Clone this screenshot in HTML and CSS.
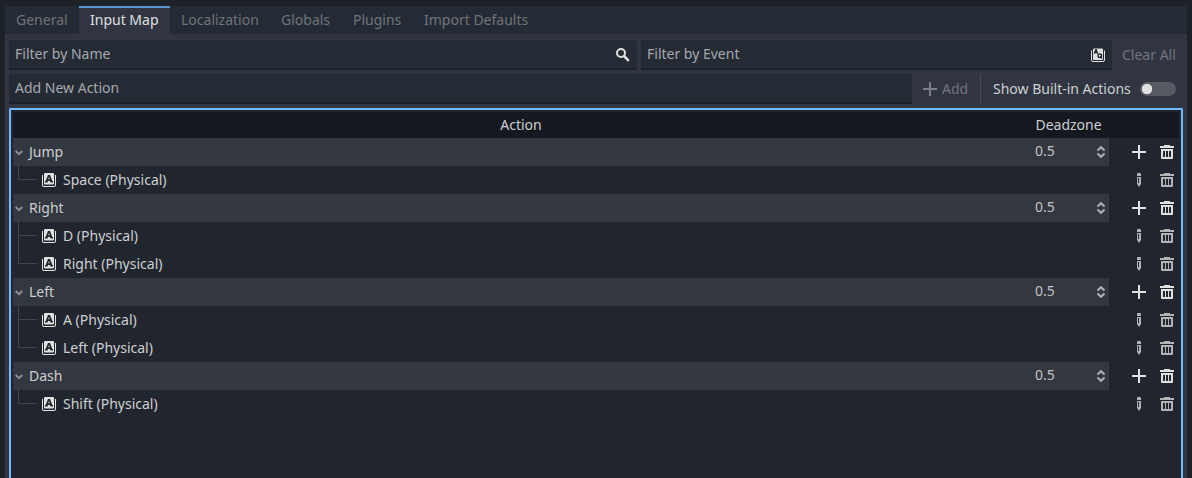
FILE: index.html
```
<!DOCTYPE html>
<html lang="en">
<head>
<meta charset="utf-8">
<title>Project Settings</title>
<link rel="stylesheet" href="styles.css">
</head>
<body>
<svg class="defs" width="0" height="0">
  <symbol id="plus" viewBox="0 0 16 16"><path d="M7 1h2v6h6v2H9v6H7V9H1V7h6z"/></symbol>
  <symbol id="trash" viewBox="0 0 16 16"><path fill-rule="evenodd" d="M5 1v1H1v2h14V2h-4V1zM2 5v9a1 1 0 0 0 1 1h10a1 1 0 0 0 1-1V5zm2 2h2v6H4zm3 0h2v6H7zm3 0h2v6h-2z"/></symbol>
  <symbol id="pencil" viewBox="0 0 16 16"><path fill-rule="evenodd" d="M7 1a1 1 0 0 0-1 1v2h4V2a1 1 0 0 0-1-1zM6 5v7l2 3 2-3V5zm1 1h1v5H7z"/></symbol>
  <symbol id="key" viewBox="0 0 16 16"><path fill-rule="evenodd" d="M4 1a1 1 0 0 0-1 1v9.500a1 1 0 0 0 1 1h8a1 1 0 0 0 1-1V2a1 1 0 0 0-1-1zm3 2h2l2.300 6H12v1.500H9.500L9 9H7l-.5 1.500H4V9h.7zm1 1.800L7.300 7.200h1.400z"/><path d="M1 3v10a2 2 0 0 0 2 2h10a2 2 0 0 0 2-2V3h-1v10a1 1 0 0 1-1 1H3a1 1 0 0 1-1-1V3z"/></symbol>
  <symbol id="chevron" viewBox="0 0 10 8"><path d="M1.700 2 5 5.200 8.300 2" fill="none" stroke="currentColor" stroke-width="2"/></symbol>
  <symbol id="updown" viewBox="0 0 10 14"><path d="M1.500 5.500 5 2.200l3.500 3.300M1.500 8.500 5 11.800l3.500-3.300" fill="none" stroke="currentColor" stroke-width="2"/></symbol>
</svg>
<div class="panel">
  <nav class="tabs">
    <span class="tab t1">General</span><span class="tab t2 active">Input Map</span><span class="tab t3">Localization</span><span class="tab t4">Globals</span><span class="tab t5">Plugins</span><span class="tab t6">Import Defaults</span>
  </nav>
  <div class="content">
    <div class="bar">
      <div class="field name"><span>Filter by Name</span><svg class="icon" viewBox="0 0 16 16"><circle cx="6" cy="6" r="4" fill="none" stroke="currentColor" stroke-width="2"/><path d="m9 9 4.800 4.800" stroke="currentColor" stroke-width="2.600"/></svg></div>
      <div class="field event"><span>Filter by Event</span><svg class="icon" viewBox="0 0 16 16"><path d="M4 1.500h8a1 1 0 0 1 1 1V12a1 1 0 0 1-1 1H4a1 1 0 0 1-1-1V2.500a1 1 0 0 1 1-1z"/><path d="M1.500 3.500V13a1.500 1.500 0 0 0 1.500 1.500h10a1.500 1.500 0 0 0 1.500-1.500V3.500" fill="none" stroke="currentColor"/><path class="cut" d="m4.300 6.800 1.500-4h.4l1.500 4M5 5.600h2"/><circle class="cut" cx="9.800" cy="8.800" r="1.800"/><path class="cut" d="m10 9.300 2 2.300"/></svg></div>
      <span class="clear">Clear All</span>
    </div>
    <div class="bar">
      <div class="field action"><span>Add New Action</span></div>
      <div class="add"><svg class="icon"><use href="#plus"/></svg><span>Add</span></div>
      <div class="builtin"><span>Show Built-in Actions</span><i class="toggle"></i></div>
    </div>
    <div class="tree">
      <div class="row head"><span class="cell">Action</span><span class="cell zone-title">Deadzone</span><span class="cell"></span></div>

      <div class="row group"><div class="label"><svg class="chev"><use href="#chevron"/></svg>Jump</div><div class="zone">0.5<svg class="spin"><use href="#updown"/></svg></div><div class="tools"><svg class="icon"><use href="#plus"/></svg><svg class="icon"><use href="#trash"/></svg></div></div>
      <div class="row event-row last"><div class="label"><i class="branch"></i><svg class="icon"><use href="#key"/></svg>Space (Physical)</div><div></div><div class="tools"><svg class="icon"><use href="#pencil"/></svg><svg class="icon"><use href="#trash"/></svg></div></div>

      <div class="row group"><div class="label"><svg class="chev"><use href="#chevron"/></svg>Right</div><div class="zone">0.5<svg class="spin"><use href="#updown"/></svg></div><div class="tools"><svg class="icon"><use href="#plus"/></svg><svg class="icon"><use href="#trash"/></svg></div></div>
      <div class="row event-row"><div class="label"><i class="branch"></i><svg class="icon"><use href="#key"/></svg>D (Physical)</div><div></div><div class="tools"><svg class="icon"><use href="#pencil"/></svg><svg class="icon"><use href="#trash"/></svg></div></div>
      <div class="row event-row last"><div class="label"><i class="branch"></i><svg class="icon"><use href="#key"/></svg>Right (Physical)</div><div></div><div class="tools"><svg class="icon"><use href="#pencil"/></svg><svg class="icon"><use href="#trash"/></svg></div></div>

      <div class="row group"><div class="label"><svg class="chev"><use href="#chevron"/></svg>Left</div><div class="zone">0.5<svg class="spin"><use href="#updown"/></svg></div><div class="tools"><svg class="icon"><use href="#plus"/></svg><svg class="icon"><use href="#trash"/></svg></div></div>
      <div class="row event-row"><div class="label"><i class="branch"></i><svg class="icon"><use href="#key"/></svg>A (Physical)</div><div></div><div class="tools"><svg class="icon"><use href="#pencil"/></svg><svg class="icon"><use href="#trash"/></svg></div></div>
      <div class="row event-row last"><div class="label"><i class="branch"></i><svg class="icon"><use href="#key"/></svg>Left (Physical)</div><div></div><div class="tools"><svg class="icon"><use href="#pencil"/></svg><svg class="icon"><use href="#trash"/></svg></div></div>

      <div class="row group"><div class="label"><svg class="chev"><use href="#chevron"/></svg>Dash</div><div class="zone">0.5<svg class="spin"><use href="#updown"/></svg></div><div class="tools"><svg class="icon"><use href="#plus"/></svg><svg class="icon"><use href="#trash"/></svg></div></div>
      <div class="row event-row last"><div class="label"><i class="branch"></i><svg class="icon"><use href="#key"/></svg>Shift (Physical)</div><div></div><div class="tools"><svg class="icon"><use href="#pencil"/></svg><svg class="icon"><use href="#trash"/></svg></div></div>
    </div>
  </div>
</div>
</body>
</html>
```
FILE: styles.css
```
* { box-sizing: border-box; }
body {
  margin: 0;
  height: 478px;
  padding: 6px 5px 0;
  overflow: hidden;
  background: #1d2229;
  color: #cdcfd2;
  font: 14px/20px "Noto Sans", sans-serif;
  white-space: nowrap;
}
.defs { display: none; }
svg { display: block; flex: none; fill: currentColor; }
.icon { width: 16px; height: 16px; color: #e0e0e0; }
.panel { display: flex; flex-direction: column; height: 472px; background: #303541; border-radius: 3px 3px 0 0; }
.tabs { display: flex; height: 28px; background: #252b34; border-radius: 3px 3px 0 0; }
.tab { padding: 4px 0 0 11px; color: #6f737a; }
.t1 { width: 74px; }
.t2 { width: 91px; }
.t3 { width: 100px; }
.t4 { width: 72px; }
.t5 { width: 71px; }
.tab.active { padding-top: 2px; border-top: 2px solid #5a94cc; background: #303541; color: #dfe0e2; }
.content { display: flex; flex-direction: column; flex: 1; gap: 4px; padding: 6px 4px 0; min-height: 0; }
.bar { display: flex; flex: none; height: 30px; }
.field {
  display: flex;
  justify-content: space-between;
  padding: 4px 6px 0;
  background: #252b34;
  border-bottom: 2px solid #1d2229;
  border-radius: 3px 3px 0 0;
  color: #a5a8ac;
}
.field .icon { margin-top: 3px; }
.name { width: 628px; margin-right: 4px; }
.event { width: 471px; }
.cut { fill: none; stroke: #252b34; stroke-width: 1.4; }
.clear { padding: 5px 0 0 10px; color: #70747d; }
.action { width: 903px; }
.add { display: flex; gap: 4px; width: 69px; padding: 5px 0 0 10px; border-right: 1px solid #444852; color: #70747d; }
.add .icon { margin-top: 2px; color: #7b7e84; }
.builtin { display: flex; gap: 9px; padding: 5px 0 0 12px; }
.toggle { width: 36px; height: 14px; margin-top: 3px; border-radius: 7px; background: radial-gradient(circle at 7px 7px, #e0e0e0 4.9px, #575a62 5.6px); }
.tree { flex: 1; min-height: 0; padding: 2px 2px 0; border: 2px solid #70bafa; border-bottom: 0; border-radius: 2px 2px 0 0; background: #21262e; }
.row { display: grid; grid-template-columns: 1016px 80px 1fr; height: 28px; }
.head { height: 26px; text-align: center; }
.head .cell { padding-top: 3px; background: #15181f; border-radius: 2px; }
.head .zone-title { padding-right: 1px; }
.label { display: flex; padding-top: 4px; }
.group .label, .group .zone { background: #33373f; }
.chev { width: 10px; height: 8px; margin: 7px 5px 0 1px; color: #8b8e93; }
.zone { display: flex; justify-content: space-between; padding: 3px 3px 0 6px; color: #c0c2c5; }
.spin { width: 10px; height: 14px; margin-top: 4px; color: #b1b3b6; }
.tools { display: flex; gap: 12px; padding: 6px 0 0 22px; }
.event-row .tools .icon { color: #b0b2b4; }
.event-row .label .icon { margin: 2px 6px 0 4px; }
.branch { width: 19px; height: 28px; margin: -4px 0 0 5px; border-left: 1px solid #40444b; background: linear-gradient(#40444b, #40444b) 0 13px / 100% 1px no-repeat; }
.last .branch { height: 14px; }
```
